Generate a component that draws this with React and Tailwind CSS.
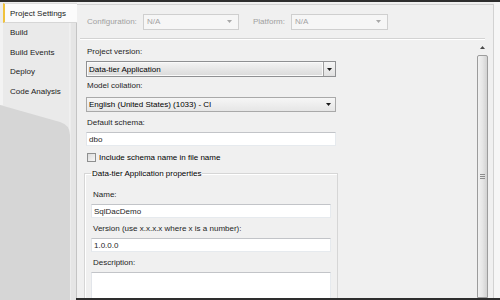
import React from "react";

function Arrow({ color = "#1a1a1a", up = false }) {
  return (
    <svg width="5" height="3" viewBox="0 0 5 3" className="block">
      {up ? (
        <path d="M0 3 L5 3 L2.5 0 Z" fill={color} />
      ) : (
        <path d="M0 0 L5 0 L2.5 3 Z" fill={color} />
      )}
    </svg>
  );
}

function DisabledSelect({ width }) {
  return (
    <div
      className={`${width} h-[16px] flex items-center justify-between border border-[#cfcfcf] bg-[#f6f6f6] pl-[3px] pr-[6px] text-[#a3a3a3]`}
    >
      <span>N/A</span>
      <Arrow color="#a8a8a8" />
    </div>
  );
}

function Tab({ label }) {
  return (
    <div className="h-[19.5px] flex items-center pl-[10px] text-[#222]">{label}</div>
  );
}

function Label({ children, className = "" }) {
  return <div className={`h-[11px] leading-[11px] text-[#1e1e1e] ${className}`}>{children}</div>;
}

function TextBox({ value, className = "" }) {
  return (
    <div
      className={`h-[14px] flex items-center bg-white border border-t-[#c2c4c8] border-l-[#e2e5ea] border-r-[#e6eaee] border-b-[#e6eaee] pl-[2px] text-[#1e1e1e] ${className}`}
    >
      {value}
    </div>
  );
}

export default function App() {
  return (
    <div className="w-[500px] h-[300px] flex flex-col overflow-hidden bg-[#f0f0f0] text-[8px] leading-[11px] [font-family:'Liberation_Sans',Arial,sans-serif]">
      <div className="h-[2px] bg-[#2e2e2e]" />
      <div className="flex-1 flex min-h-0">
        {/* sidebar tabs */}
        <div className="w-[77px] flex flex-col pt-[1px] bg-[#ececec]">
          <div className="h-[20px] ml-[3px] flex items-center pl-[5px] bg-[#fbfbfb] border-l-2 border-[#f0c23c] border-t border-b border-t-[#dcdcdc] border-b-[#d6d6d6] text-[#1a1a1a]">
            Project Settings
          </div>
          <div className="relative flex-1 border-r border-[#c4c4c4]">
            <svg
              className="absolute inset-0"
              width="76"
              height="280"
              viewBox="0 0 76 280"
              preserveAspectRatio="none"
            >
              <rect x="0" y="0" width="76" height="280" fill="#eaeaea" />
              <rect x="70" y="0" width="6" height="280" fill="#e5e5e5" />
              <line x1="70" y1="0" x2="70" y2="280" stroke="#f6f6f6" strokeWidth="1" />
              <path d="M0 82 L60 99 Q70 102 70 112 L70 280 L0 280 Z" fill="#d6d6d6" />
              <rect x="0" y="0" width="3" height="82" fill="#f3f3f3" />
            </svg>
            <div className="relative flex flex-col">
              <Tab label="Build" />
              <Tab label="Build Events" />
              <Tab label="Deploy" />
              <Tab label="Code Analysis" />
            </div>
          </div>
        </div>

        {/* main panel */}
        <div className="flex-1 flex flex-col mt-[2px] border-t border-r border-[#d2d2d2] min-w-0">
          <div className="h-[33px] flex items-center pl-[10px] text-[#a0a0a0]">
            <span className="w-[56px]">Configuration:</span>
            <DisabledSelect width="w-[96px]" />
            <span className="ml-[14px] w-[38px]">Platform:</span>
            <DisabledSelect width="w-[97px]" />
          </div>
          <div className="ml-[3px] mr-[8px] h-[2px] border-t border-[#d3d3d3] bg-white" />

          <div className="flex-1 flex min-h-0">
            <div className="flex-1 overflow-hidden pl-[7px] pt-[6px]">
              <Label className="ml-[3px]">Project version:</Label>
              <div className="mt-[4px] ml-[2px] w-[250px] h-[16px] flex border border-[#8f9092] bg-[#ececec]">
                <div className="flex-1 flex items-center pl-[2px] border-r border-[#a0a0a0] bg-gradient-to-b from-[#f4f4f4] to-[#dadada] shadow-[inset_0_0_0_1px_#fafafa]">
                  Data-tier Application
                </div>
                <div className="w-[11px] flex items-center justify-center bg-gradient-to-b from-[#f5f5f5] to-[#e1e1e1]">
                  <Arrow />
                </div>
              </div>

              <Label className="ml-[3px] mt-[3px]">Model collation:</Label>
              <div className="mt-[6px] ml-[2px] w-[250px] h-[15px] flex items-center justify-between border border-[#a9a9a9] bg-gradient-to-b from-[#f6f6f6] to-[#e6e6e6] pl-[2px] pr-[4px]">
                <span>English (United States) (1033) - CI</span>
                <Arrow />
              </div>

              <Label className="ml-[3px] mt-[5px]">Default schema:</Label>
              <TextBox value="dbo" className="mt-[4px] ml-[2px] w-[250px]" />

              <div className="mt-[6px] ml-[3px] h-[11px] flex items-center gap-[3px]">
                <div className="w-[9px] h-[9px] border border-[#8e8f8f] bg-gradient-to-br from-[#dcdcdc] to-[#f6f6f6]" />
                <span>Include schema name in file name</span>
              </div>

              <fieldset className="mt-[5px] w-[254px] border border-[#d6d6d6] pl-[6px] pb-[4px] shadow-[inset_1px_1px_0_#ffffff]">
                <legend className="px-[1px] h-[11px] leading-[11px]">Data-tier Application properties</legend>
                <Label className="ml-[2px] mt-[10px]">Name:</Label>
                <TextBox value="SqlDacDemo" className="mt-[4px] w-[240px]" />
                <Label className="ml-[2px] mt-[5px]">Version (use x.x.x.x where x is a number):</Label>
                <TextBox value="1.0.0.0" className="mt-[4px] w-[240px]" />
                <Label className="ml-[2px] mt-[5px]">Description:</Label>
                <div className="mt-[4px] w-[240px] h-[40px] bg-white border border-t-[#c2c4c8] border-l-[#e2e5ea] border-r-[#e6eaee]" />
              </fieldset>
            </div>

            {/* scrollbar */}
            <div className="w-[13px] mr-[4px] flex flex-col">
              <div className="h-[15px] flex items-center justify-center">
                <Arrow up color="#4a4a4a" />
              </div>
              <div className="flex-1 mx-[1px] flex items-center justify-center rounded-t-[2px] border border-[#9c9c9c] bg-gradient-to-r from-[#f2f2f2] via-[#e6e6e6] to-[#d2d2d2]">
                <div className="flex flex-col gap-[1px]">
                  <div className="w-[5px] h-px bg-[#8c8c8c]" />
                  <div className="w-[5px] h-px bg-[#8c8c8c]" />
                  <div className="w-[5px] h-px bg-[#8c8c8c]" />
                </div>
              </div>
            </div>
          </div>
        </div>

        <div className="w-[6px] bg-[#f6f6f6]" />
      </div>
      <div className="h-[2px] bg-[#2e2e2e]" />
    </div>
  );
}
